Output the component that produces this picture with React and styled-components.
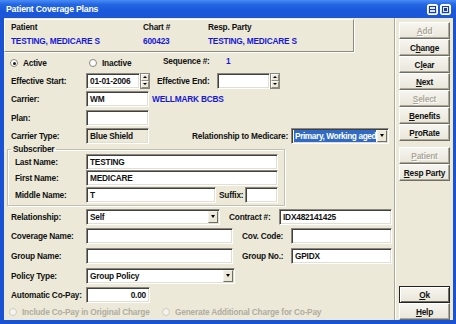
import React from 'react'
import styled, { createGlobalStyle } from 'styled-components'

const GlobalStyle = createGlobalStyle`
  html, body { margin: 0; padding: 0; background: #fff; }
  body { font-family: "Liberation Sans", Arial, sans-serif; }
  * { box-sizing: border-box; }
`

const Window = styled.div`
  width: 456px;
  height: 324px;
  display: flex;
  flex-direction: column;
  background: #1A52D4;
  font-family: "Liberation Sans", Arial, sans-serif;
  font-size: 8.3px;
  letter-spacing: -0.2px;
  font-weight: bold;
  color: #111;
`

const TitleBar = styled.div`
  height: 18px;
  flex: none;
  display: flex;
  align-items: center;
  justify-content: space-between;
  padding: 0 5px 0 6px;
  background: linear-gradient(180deg, #4A8CF5 0%, #2366E2 25%, #1A58DA 60%, #1B56D6 100%);
  color: #fff;
  font-size: 8.7px;
`

const TitleButtons = styled.div`
  display: flex;
  gap: 2px;
`

const TitleBtn = styled.div`
  width: 11px;
  height: 11px;
  border: 1px solid #fff;
  border-radius: 2px;
  background: linear-gradient(180deg, #F2F6FE, #C9D8F4);
  display: flex;
  align-items: center;
  justify-content: center;
`

const Body = styled.div`
  flex: 1;
  display: flex;
  margin: 0 3px 4px 4px;
  background: #ECE9D8;
`

const Main = styled.div`
  width: 390px;
  display: flex;
  flex-direction: column;
`

const Header = styled.div`
  margin-top: 1px;
  width: 350px;
  height: 33px;
  border: 1px solid;
  border-color: #fff #8E8B7E #8E8B7E #fff;
  box-shadow: 1px 1px 0 #fff;
  display: grid;
  grid-template-columns: 132px 65px 1fr;
  grid-template-rows: 11px 11px;
  row-gap: 3px;
  padding: 2px 6px 0;
  line-height: 11px;
`

const Blue = styled.span`
  color: #1717D8;
  margin-left: ${p => p.$ml || 0}px;
  margin-bottom: ${p => p.$up || 0}px;
`

const Form = styled.div`
  padding: 2px 0 0 3px;
  display: flex;
  flex-direction: column;
`

const Row = styled.div`
  height: ${p => p.$h || 18}px;
  margin-top: ${p => p.$mt || 0}px;
  display: flex;
  align-items: center;
  padding-left: ${p => (p.$pl != null ? p.$pl : 4)}px;
  white-space: nowrap;
`

const Label = styled.span`
  width: ${p => p.$w || 75}px;
  margin-left: ${p => p.$ml || 0}px;
  margin-bottom: ${p => p.$up || 0}px;
  flex: none;
`

const Field = styled.div`
  width: ${p => p.$w}px;
  height: 16px;
  flex: none;
  background: ${p => (p.$ro ? '#ECE9D8' : '#fff')};
  border: 1px solid;
  border-color: #8A877C #FFFFFF #FFFFFF #8A877C;
  box-shadow: inset 1px 1px 0 #404040, inset -1px -1px 0 #E2DFD2;
  padding: 0 3px;
  line-height: 14px;
  display: flex;
  align-items: center;
  justify-content: ${p => (p.$right ? 'flex-end' : 'flex-start')};
`

const SelectBox = styled(Field)`
  padding: 1px 1px 1px 2px;
  justify-content: space-between;
`

const SelectText = styled.span`
  flex: 1;
  height: 12px;
  line-height: 12px;
  padding-left: 1px;
  margin-right: 1px;
  overflow: hidden;
  letter-spacing: ${p => (p.$hl ? '-0.4px' : '-0.2px')};
  background: ${p => (p.$hl ? '#316AC5' : 'transparent')};
  color: ${p => (p.$hl ? '#fff' : '#111')};
`

const DropBtn = styled.span`
  width: 10px;
  height: 12px;
  flex: none;
  background: #ECE9D8;
  border: 1px solid;
  border-color: #F4F3EE #716F64 #716F64 #F4F3EE;
  display: flex;
  align-items: center;
  justify-content: center;
  &::after {
    content: '';
    border-left: 2px solid transparent;
    border-right: 2px solid transparent;
    border-top: 3px solid #000;
  }
`

const Spinner = styled.div`
  width: 10px;
  height: 16px;
  flex: none;
  display: flex;
  flex-direction: column;
  border: 1px solid #8A877C;
`

const SpinHalf = styled.div`
  flex: 1;
  background: #ECE9D8;
  border: 1px solid;
  border-color: #fff #8E8B7E #8E8B7E #fff;
  display: flex;
  align-items: center;
  justify-content: center;
  &::after {
    content: '';
    border-left: 2px solid transparent;
    border-right: 2px solid transparent;
    ${p => (p.$down ? 'border-top' : 'border-bottom')}: 2px solid #000;
  }
`

const RadioItem = styled.span`
  width: ${p => p.$w}px;
  flex: none;
  display: flex;
  align-items: center;
  gap: 5px;
  color: ${p => (p.$off ? '#B0AD9F' : '#111')};
`

const Circle = styled.span`
  width: 8px;
  height: 8px;
  border-radius: 50%;
  border: 1px solid ${p => (p.$off ? '#CFCCBE' : '#8A877C')};
  background: ${p => (p.$off ? '#F4F3EE' : '#fff')};
  display: flex;
  align-items: center;
  justify-content: center;
  &::after {
    content: '';
    width: 3px;
    height: 3px;
    border-radius: 50%;
    background: ${p => (p.$on ? '#1a1a1a' : 'transparent')};
  }
`

const Group = styled.fieldset`
  margin: 0;
  width: 278px;
  padding: 0 0 2px 3px;
  border: 1px solid #C3C0B2;
  box-shadow: inset 1px 1px 0 #fff, 1px 1px 0 #fff;
`

const Legend = styled.legend`
  padding: 0 2px;
  line-height: 10px;
`

const ButtonCol = styled.div`
  flex: 1;
  display: flex;
  flex-direction: column;
  padding: 4px 2px 0 4px;
  border-left: 1px solid #ACA899;
  box-shadow: inset 1px 0 0 #fff;
`

const Btn = styled.button`
  width: 51px;
  height: 17px;
  flex: none;
  margin: ${p => p.$mt || 0}px 0 0;
  padding: 0;
  font: bold 8.3px "Liberation Sans", Arial, sans-serif;
  letter-spacing: -0.2px;
  color: ${p => (p.disabled ? '#ACA899' : '#111')};
  text-shadow: ${p => (p.disabled ? '1px 1px 0 #fff' : 'none')};
  background: linear-gradient(180deg, #F6F5EF, #E9E6D9);
  border: 1px solid;
  border-color: #fff #716F64 #716F64 #fff;
  box-shadow: inset -1px -1px 0 #ACA899;
  ${p => p.$auto && 'margin-top: auto;'}
  ${p => p.$default && `
    border-color: #222;
    box-shadow: inset 1px 1px 0 #fff, inset -1px -1px 0 #716F64;
  `}
`

const TitleIcon = ({ second }) => (
  <svg width="7" height="7" viewBox="0 0 7 7">
    <rect x="0.5" y="0.5" width="6" height="6" fill="none" stroke="#1B3D9A" />
    {second
      ? <rect x="2" y="2" width="3" height="3" fill="#1B3D9A" />
      : <line x1="1" y1="3.5" x2="6" y2="3.5" stroke="#1B3D9A" />}
  </svg>
)

const Select = ({ w, hl, children }) => (
  <SelectBox $w={w}>
    <SelectText $hl={hl}>{children}</SelectText>
    <DropBtn />
  </SelectBox>
)

const Spin = () => (
  <Spinner>
    <SpinHalf />
    <SpinHalf $down />
  </Spinner>
)

const Radio = ({ w, on, off, children }) => (
  <RadioItem $w={w} $off={off}>
    <Circle $on={on} $off={off} />
    {children}
  </RadioItem>
)

const App = () => {
  return (
    <Window>
      <GlobalStyle />
      <TitleBar>
        <span>Patient Coverage Plans</span>
        <TitleButtons>
          <TitleBtn><TitleIcon /></TitleBtn>
          <TitleBtn><TitleIcon second /></TitleBtn>
        </TitleButtons>
      </TitleBar>
      <Body>
        <Main>
          <Header>
            <span>Patient</span>
            <span>Chart #</span>
            <span>Resp. Party</span>
            <Blue>TESTING, MEDICARE S</Blue>
            <Blue>600423</Blue>
            <Blue>TESTING, MEDICARE S</Blue>
          </Header>
          <Form>
            <Row $pl={3}>
              <Radio w={79} on>Active</Radio>
              <Radio w={74}>Inactive</Radio>
              <Label $w={63} $up={4}>Sequence #:</Label>
              <Blue $up={4}>1</Blue>
            </Row>
            <Row $h={17}>
              <Label>Effective Start:</Label>
              <Field $w={54}>01-01-2006</Field>
              <Spin />
              <Label $w={60} $ml={7}>Effective End:</Label>
              <Field $w={53} />
              <Spin />
            </Row>
            <Row $h={19}>
              <Label>Carrier:</Label>
              <Field $w={63}>WM</Field>
              <Blue $ml={3}>WELLMARK BCBS</Blue>
            </Row>
            <Row $h={19}>
              <Label>Plan:</Label>
              <Field $w={63} />
            </Row>
            <Row $h={17}>
              <Label>Carrier Type:</Label>
              <Field $w={63} $ro>Blue Shield</Field>
              <Label $w={99} $ml={43}>Relationship to Medicare:</Label>
              <Select w={98} hl>Primary, Working aged</Select>
            </Row>
            <Group>
              <Legend>Subscriber</Legend>
              <Row $h={15}>
                <Label $w={71}>Last Name:</Label>
                <Field $w={192}>TESTING</Field>
              </Row>
              <Row $h={17}>
                <Label $w={71}>First Name:</Label>
                <Field $w={192}>MEDICARE</Field>
              </Row>
              <Row $h={17}>
                <Label $w={71}>Middle Name:</Label>
                <Field $w={130}>T</Field>
                <Label $w={26} $ml={3}>Suffix:</Label>
                <Field $w={33} />
              </Row>
            </Group>
            <Row $h={19} $mt={1}>
              <Label>Relationship:</Label>
              <Select w={134}>Self</Select>
              <Label $w={50} $ml={9}>Contract #:</Label>
              <Field $w={113}>IDX482141425</Field>
            </Row>
            <Row $h={20}>
              <Label>Coverage Name:</Label>
              <Field $w={147} />
              <Label $w={49} $ml={9}>Cov. Code:</Label>
              <Field $w={101} />
            </Row>
            <Row $h={20}>
              <Label>Group Name:</Label>
              <Field $w={147} />
              <Label $w={49} $ml={9}>Group No.:</Label>
              <Field $w={101}>GPIDX</Field>
            </Row>
            <Row $h={19}>
              <Label>Policy Type:</Label>
              <Select w={149}>Group Policy</Select>
            </Row>
            <Row $h={19}>
              <Label>Automatic Co-Pay:</Label>
              <Field $w={64} $right>0.00</Field>
            </Row>
            <Row $pl={2} $h={15}>
              <Radio w={153} off>Include Co-Pay in Original Charge</Radio>
              <Radio w={200} off>Generate Additional Charge for Co-Pay</Radio>
            </Row>
          </Form>
        </Main>
        <ButtonCol>
          <Btn disabled><u>A</u>dd</Btn>
          <Btn>C<u>h</u>ange</Btn>
          <Btn>C<u>l</u>ear</Btn>
          <Btn><u>N</u>ext</Btn>
          <Btn disabled><u>S</u>elect</Btn>
          <Btn><u>B</u>enefits</Btn>
          <Btn>P<u>r</u>oRate</Btn>
          <Btn disabled $mt={6}><u>P</u>atient</Btn>
          <Btn><u>R</u>esp Party</Btn>
          <Btn $auto $default><u>O</u>k</Btn>
          <Btn><u>H</u>elp</Btn>
        </ButtonCol>
      </Body>
    </Window>
  )
}

export default App
